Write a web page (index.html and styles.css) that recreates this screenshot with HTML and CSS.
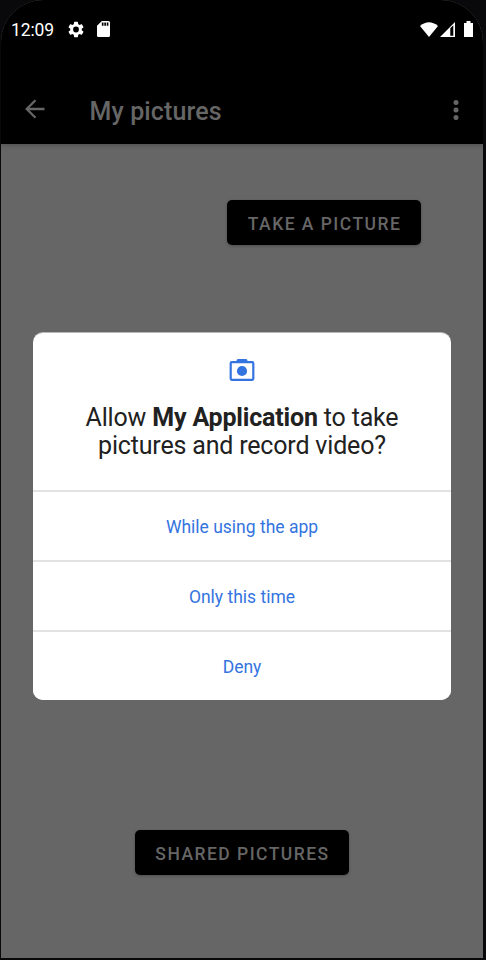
FILE: index.html
```html
<!DOCTYPE html>
<html lang="en">
<head>
<meta charset="utf-8">
<title>My pictures</title>
<link rel="stylesheet" href="styles.css">
</head>
<body>
<div class="screen">
  <header class="top">
    <div class="status">
      <span class="time">12:09</span>
      <svg class="gear" viewBox="2 2 20 20"><path fill="#fff" d="M19.14 12.94c.04-.3.06-.61.06-.94s-.02-.64-.07-.94l2.03-1.58a.49.49 0 0 0 .12-.61l-1.92-3.32a.488.488 0 0 0-.59-.22l-2.39.96c-.5-.38-1.03-.7-1.62-.94L14.4 2.81a.484.484 0 0 0-.48-.41h-3.84c-.24 0-.43.17-.47.41l-.36 2.54c-.59.24-1.13.57-1.62.94l-2.39-.96a.48.48 0 0 0-.59.22L2.74 8.87c-.12.21-.08.47.12.61l2.03 1.58c-.05.3-.09.63-.09.94s.02.64.07.94l-2.03 1.58a.49.49 0 0 0-.12.61l1.92 3.32c.12.22.37.29.59.22l2.39-.96c.5.38 1.03.7 1.62.94l.36 2.54c.05.24.24.41.48.41h3.84c.24 0 .44-.17.47-.41l.36-2.54c.59-.24 1.13-.56 1.62-.94l2.39.96c.22.08.47 0 .59-.22l1.92-3.32a.48.48 0 0 0-.12-.61zM12 15.6a3.6 3.6 0 1 1 0-7.2 3.6 3.6 0 0 1 0 7.2z"/></svg>
      <svg class="card" viewBox="4 2 16 20" preserveAspectRatio="none"><path fill="#fff" fill-rule="evenodd" d="M18 2h-8L4 8v12c0 1.100.9 2 2 2h12c1.100 0 2-.9 2-2V4c0-1.100-.9-2-2-2zM10 4h2v4h-2zm3 0h2v4h-2zm3 0h2v4h-2z"/></svg>
      <span class="spacer"></span>
      <svg class="wifi" viewBox="0 0 18 15"><path fill="#fff" d="M0 4Q9-3.500 18 4L9 15z"/></svg>
      <svg class="signal" viewBox="0 0 15 15"><path fill="#fff" fill-rule="evenodd" d="M0 15L15 0v15zM10.300 6.200V13.800h3V3.200z"/></svg>
      <svg class="battery" viewBox="0 0 9 16"><path fill="#fff" d="M0 2h2.500V0h4v2H9v14H0z"/></svg>
    </div>
    <div class="toolbar">
      <svg class="back" viewBox="0 0 20 20"><path fill="none" stroke="#666" stroke-width="2.300" d="M19.500 10H2M10.500 1.200L1.700 10l8.800 8.800"/></svg>
      <h1 class="title">My pictures</h1>
      <svg class="more" viewBox="0 0 6 20"><g fill="#666"><circle cx="3" cy="2.600" r="2.500"/><circle cx="3" cy="10" r="2.500"/><circle cx="3" cy="17.400" r="2.500"/></g></svg>
    </div>
  </header>
  <main class="content">
    <button class="action take">TAKE A PICTURE</button>
    <section class="dialog">
      <div class="message">
        <svg class="camera" viewBox="0 0 26 24"><rect x="1.700" y="4.200" width="22.600" height="17.600" rx="1" fill="none" stroke="#3474e0" stroke-width="2.200"/><path fill="#3474e0" d="M7 4L8 1.500Q8.300 1 9 1h8q.7 0 1 .5L19 4z"/><circle cx="13" cy="13" r="5.100" fill="#3474e0"/></svg>
        <p class="question">Allow <b>My Application</b> to take<br>pictures and record video?</p>
      </div>
      <button class="option">While using the app</button>
      <button class="option">Only this time</button>
      <button class="option">Deny</button>
    </section>
    <button class="action shared">SHARED PICTURES</button>
  </main>
</div>
</body>
</html>
```
FILE: styles.css
```css
* { box-sizing: border-box; }
body {
  margin: 0;
  height: 960px;
  padding: 0 3px 2px 1px;
  background: #09090b;
  font-family: Roboto, sans-serif;
  overflow: hidden;
}
button {
  border: 0;
  padding: 0;
  font-family: inherit;
}
svg { display: block; flex: none; }
.screen {
  width: 482px;
  height: 958px;
  display: flex;
  flex-direction: column;
  background: #666;
  border-radius: 42px 42px 0 0;
  overflow: hidden;
}
.top {
  height: 144px;
  flex: none;
  background: #000;
  box-shadow: 0 1px 5px rgba(0, 0, 0, .25);
}
.status {
  height: 60px;
  display: flex;
  align-items: center;
  padding: 0 10px;
}
.time {
  width: 57px;
  color: #fff;
  font-size: 17.5px;
  letter-spacing: -.1px;
}
.gear { width: 16px; height: 17px; margin-top: -2px; }
.card { width: 13px; height: 16px; margin: -2px 0 0 13px; }
.spacer { flex: 1; }
.wifi { width: 18px; height: 15px; margin-top: -1px; }
.signal { width: 15px; height: 15px; margin: -1px 0 0 2px; }
.battery { width: 9px; height: 16px; margin: -2px 0 0 9px; }
.toolbar {
  height: 84px;
  display: flex;
  align-items: center;
  padding: 0 24px 0 24px;
}
.back { width: 20px; height: 20px; margin: 14px 0 0; }
.title {
  flex: 1;
  margin: 20px 0 0 44.5px;
  color: #666;
  font-size: 25px;
  font-weight: 500;
  line-height: 30px;
  letter-spacing: .12px;
}
.more { width: 6px; height: 20px; margin-top: 15px; }
.content {
  flex: 1;
  display: flex;
  flex-direction: column;
  align-items: center;
  padding-top: 56px;
}
.action {
  height: 45px;
  border-radius: 5px;
  background: #000;
  color: #666;
  font-size: 17.5px;
  font-weight: 500;
  letter-spacing: 1.46px;
  padding: 2px 0 0 1px;
  box-shadow: 0 1px 3px rgba(0, 0, 0, .25);
}
.take {
  width: 194px;
  align-self: flex-end;
  margin-right: 62px;
}
.dialog {
  width: 418px;
  height: 368px;
  margin-top: 87px;
  border-radius: 10px;
  border-top: 1px solid #b8b8b8;
  background: #fff;
  display: flex;
  flex-direction: column;
  overflow: hidden;
}
.message {
  height: 157px;
  padding-top: 25px;
  display: flex;
  flex-direction: column;
  align-items: center;
}
.camera { width: 26px; height: 24px; }
.question {
  margin: 22px 0 0;
  color: #212121;
  font-size: 25px;
  line-height: 28px;
  letter-spacing: -.18px;
  text-align: center;
}
.option {
  height: 70px;
  padding-top: 2px;
  border-top: 2px solid #e2e2e2;
  background: #fff;
  color: #3474e0;
  font-size: 17.5px;
}
.shared { width: 214px; margin-top: 130px; }
```
